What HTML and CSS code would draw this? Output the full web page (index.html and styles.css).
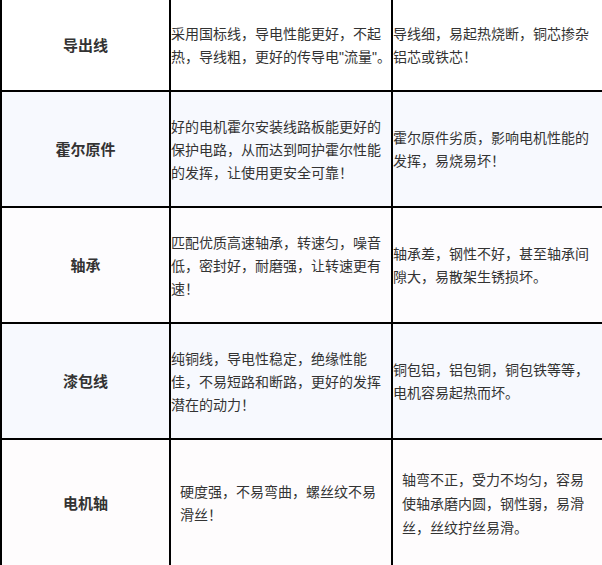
FILE: index.html
```html
<!DOCTYPE html>
<html lang="zh-CN">
<head>
<meta charset="utf-8">
<title>电机部件对比</title>
<link rel="stylesheet" href="styles.css">
</head>
<body>
<table class="cmp">
  <colgroup>
    <col class="w1"><col class="w2"><col class="w3">
  </colgroup>
  <tbody>
    <tr class="r first">
      <td class="name">导出线</td>
      <td class="txt tight">采用国标线，导电性能更好，不起热，导线粗，更好的传导电<span class="q">"流量"</span>。</td>
      <td class="txt last">导线细，易起热烧断，铜芯掺杂铝芯或铁芯！</td>
    </tr>
    <tr class="r blue">
      <td class="name">霍尔原件</td>
      <td class="txt">好的电机霍尔安装线路板能更好的保护电路，从而达到呵护霍尔性能的发挥，让使用更安全可靠！</td>
      <td class="txt last">霍尔原件劣质，影响电机性能的发挥，易烧易坏！</td>
    </tr>
    <tr class="r lilac">
      <td class="name">轴承</td>
      <td class="txt">匹配优质高速轴承，转速匀，噪音低，密封好，耐磨强，让转速更有速！</td>
      <td class="txt last">轴承差，钢性不好，甚至轴承间隙大，易散架生锈损坏。</td>
    </tr>
    <tr class="r blue">
      <td class="name">漆包线</td>
      <td class="txt">纯铜线，导电性稳定，绝缘性能佳，不易短路和断路，更好的发挥潜在的动力！</td>
      <td class="txt last">铜包铝，铝包铜，铜包铁等等，电机容易起热而坏。</td>
    </tr>
    <tr class="r end pink">
      <td class="name">电机轴</td>
      <td class="txt pad narrow">硬度强，不易弯曲，螺丝纹不易滑丝！</td>
      <td class="txt last pad tall">轴弯不正，受力不均匀，容易使轴承磨内圆，钢性弱，易滑丝，丝纹拧丝易滑。</td>
    </tr>
  </tbody>
</table>
</body>
</html>
```

FILE: styles.css
```css
html, body {
  margin: 0;
  padding: 0;
  background: #ffffff;
  overflow: hidden;
}

.cmp {
  width: 602px;
  table-layout: fixed;
  border-collapse: separate;
  border-spacing: 0;
  font-family: "Noto Sans CJK SC", "Noto Sans", sans-serif;
  color: #333333;
}

.w1 { width: 169px; }
.w2 { width: 222px; }
.w3 { width: 211px; }

.cmp td {
  border-left: 2px solid #000000;
  border-bottom: 2px solid #000000;
  vertical-align: middle;
  padding: 0;
  box-sizing: border-box;
}

.r { height: 116px; }
.r.first { height: 92px; }
.r.end { height: 125px; }
.r.end td { border-bottom: none; }

.blue td { background: #f7f9fe; }
.lilac td { background: #fdfcfe; }
.pink td { background: #fefcfd; }

.name {
  text-align: center;
  font-size: 15px;
  font-weight: bold;
  line-height: 22px;
}

.txt {
  font-size: 14px;
  line-height: 23px;
  padding-right: 4px;
}

.txt.tight { padding-right: 0; }

.q {
  font-family: "Liberation Sans", "Noto Sans CJK SC", sans-serif;
}

.txt.last { padding-right: 10px; }

.txt.pad { padding-left: 9px; }

.txt.narrow { padding-right: 12px; }

.txt.tall { line-height: 24px; }
```
